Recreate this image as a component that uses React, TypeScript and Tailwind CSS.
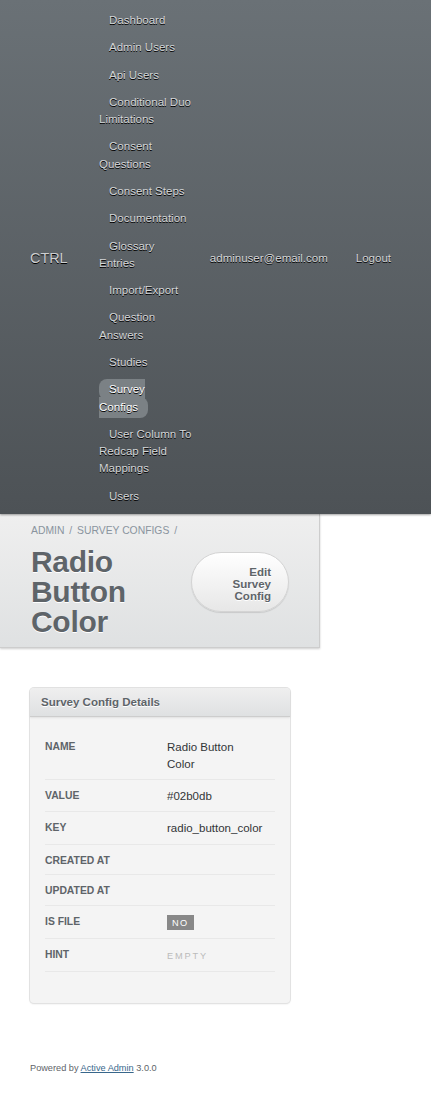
import React from "react";

const tabs: { lines: string[]; current?: boolean }[] = [
  { lines: ["Dashboard"] },
  { lines: ["Admin Users"] },
  { lines: ["Api Users"] },
  { lines: ["Conditional Duo", "Limitations"] },
  { lines: ["Consent", "Questions"] },
  { lines: ["Consent Steps"] },
  { lines: ["Documentation"] },
  { lines: ["Glossary", "Entries"] },
  { lines: ["Import/Export"] },
  { lines: ["Question", "Answers"] },
  { lines: ["Studies"] },
  { lines: ["Survey", "Configs"], current: true },
  { lines: ["User Column To", "Redcap Field", "Mappings"] },
  { lines: ["Users"] },
];

const rows: { label: string; value: React.ReactNode }[] = [
  { label: "Name", value: (<>Radio Button<br />Color</>) },
  { label: "Value", value: "#02b0db" },
  { label: "Key", value: "radio_button_color" },
  { label: "Created At", value: null },
  { label: "Updated At", value: null },
  {
    label: "Is File",
    value: (
      <span className="bg-[#888888] text-white uppercase tracking-[0.15em] text-[9.2px] pt-[3px] pb-[2px] px-[5px]">
        No
      </span>
    ),
  },
  {
    label: "Hint",
    value: (
      <span className="text-[#bbbbbb] uppercase tracking-[0.2em] text-[9.2px]">Empty</span>
    ),
  },
];

export default function App() {
  return (
    <div className="min-h-[1120px] bg-white font-['Liberation_Sans',Arial,sans-serif] text-[11.52px] leading-[1.5] text-[#323537]">
      <header className="relative z-10 flex items-center bg-[linear-gradient(180deg,#6a7176,#4d5256)] pl-[30px] pr-[30px] pt-[7px] pb-[4px] shadow-[0_1px_2px_rgba(0,0,0,0.37)] [text-shadow:0_1px_0_#000]">
        <h1 className="w-[69px] shrink-0 text-[14.4px] leading-[1] font-normal text-[#cdcfd1]">CTRL</h1>
        <ul className="w-[100px] shrink-0 flex flex-col items-start">
          {tabs.map((t) => (
            <li key={t.lines.join(" ")} className="py-[5px] leading-[17.28px] whitespace-nowrap">
              <a
                className={
                  "px-[10px] pt-[4px] pb-[5px] rounded-[8px] [box-decoration-break:slice] " +
                  (t.current ? "bg-[#7b8185] text-white" : "text-[#d4d6d8]")
                }
              >
                {t.lines.map((l, i) => (
                  <React.Fragment key={l}>
                    {i > 0 && <br />}
                    {l}
                  </React.Fragment>
                ))}
              </a>
            </li>
          ))}
        </ul>
        <div className="flex-1 flex justify-end whitespace-nowrap text-[#d4d6d8]">
          <a className="px-[10px]">adminuser@email.com</a>
          <a className="px-[10px] ml-[8px]">Logout</a>
        </div>
      </header>

      <div className="w-[320px] flex items-center border-r border-b border-[#cdcdcd] bg-[linear-gradient(180deg,#efefef,#dfe1e2)] pl-[31px] pr-[30px] pt-[12px] pb-[10px] shadow-[0_1px_2px_rgba(0,0,0,0.2)]">
        <div className="flex-1">
          <div className="text-[10.37px] leading-[10.37px] mb-[11px] text-[#8a949e] uppercase">
            <span>Admin</span>
            <span className="mx-[2px]"> / </span>
            <span>Survey Configs</span>
            <span className="mx-[2px]"> /</span>
          </div>
          <h2 className="text-[30px] leading-[30px] font-bold tracking-[-0.3px] text-[#5e6469] [text-shadow:0_1px_0_#fff]">
            Radio
            <br />
            Button
            <br />
            Color
          </h2>
        </div>
        <a className="w-[98px] h-[60px] shrink-0 flex flex-col justify-center items-end pr-[17px] pt-[4px] rounded-[200px] border border-[#d4d4d4] bg-[linear-gradient(180deg,#ffffff,#e7e7e7)] shadow-[0_1px_1px_rgba(0,0,0,0.12)] text-[11.52px] leading-[12px] font-bold text-[#5e6469] text-right [text-shadow:0_1px_0_#fff]">
          <span>Edit</span>
          <span>Survey</span>
          <span>Config</span>
        </a>
      </div>

      <main className="pl-[30px] pt-[40px]">
        <div className="w-[260px] rounded-[4px] bg-[#f4f4f4] shadow-[0_0_0_1px_#e2e2e2,0_1px_2px_rgba(0,0,0,0.12)]">
          <h3 className="rounded-t-[4px] border-b border-[#cdcdcd] bg-[linear-gradient(180deg,#efefef,#dfe1e2)] pl-[11px] pt-[6px] pb-[4px] text-[11.52px] leading-[17.28px] font-bold text-[#5e6469] [text-shadow:0_1px_0_#fff] shadow-[0_1px_2px_rgba(0,0,0,0.08)]">
            Survey Config Details
          </h3>
          <div className="px-[15px] pt-[14px] pb-[31px]">
            <table className="w-[230px] border-collapse">
              <tbody>
                {rows.map((r) => (
                  <tr key={r.label} className="border-b border-[#e8e8e8]">
                    <th className="w-[122px] pt-[8px] pb-[6px] text-left align-top text-[10.37px] leading-[15.55px] font-bold uppercase text-[#5e6469]">
                      {r.label}
                    </th>
                    <td className="pt-[8px] pb-[6px] pr-[12px] align-top leading-[17.28px] text-[#323537]">
                      {r.value}
                    </td>
                  </tr>
                ))}
              </tbody>
            </table>
          </div>
        </div>
      </main>

      <footer className="px-[30px] pt-[59px] text-[9.2px] leading-[13.8px] text-[#5e6469]">
        Powered by <a className="text-[#38678b] underline">Active Admin</a> 3.0.0
      </footer>
    </div>
  );
}
